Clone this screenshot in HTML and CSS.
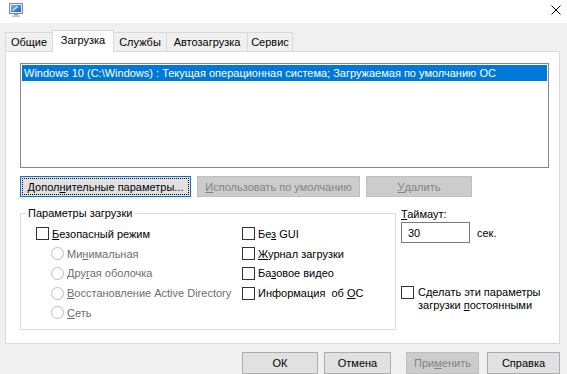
FILE: index.html
```html
<!DOCTYPE html>
<html lang="ru">
<head>
<meta charset="utf-8">
<title>Конфигурация системы</title>
<link rel="stylesheet" href="styles.css">
</head>
<body>
<div class="window">
  <div class="titlebar">
    <svg class="app-icon" width="16" height="16" viewBox="0 0 16 16">
      <defs>
        <linearGradient id="scr" x1="0" y1="0" x2="1" y2="1">
          <stop offset="0" stop-color="#6fb4f0"/>
          <stop offset="1" stop-color="#1a5fc8"/>
        </linearGradient>
      </defs>
      <rect x="1.5" y="1.5" width="13" height="10" fill="#e8eef5" stroke="#7d8a99"/>
      <rect x="3" y="3" width="10" height="7" fill="url(#scr)"/>
      <path d="M4 8 L9 4 L10 5 L5 9 Z" fill="#ffffff" opacity="0.8"/>
      <rect x="6" y="12" width="4" height="1.5" fill="#8a96a3"/>
      <rect x="4" y="13.5" width="8" height="1.5" fill="#b5bec8"/>
    </svg>
    <div class="close">
      <svg width="10" height="10" viewBox="0 0 10 10">
        <path d="M0.5 0.5 L9.5 9.5 M9.5 0.5 L0.5 9.5" stroke="#000" stroke-width="1" fill="none"/>
      </svg>
    </div>
  </div>
  <div class="client">
    <div class="tabs">
      <div class="tab t1">Общие</div>
      <div class="tab t2 active">Загрузка</div>
      <div class="tab t3">Службы</div>
      <div class="tab t4">Автозагрузка</div>
      <div class="tab t5">Сервис</div>
    </div>
    <div class="panel">
      <div class="listbox">
        <div class="item selected">Windows 10 (C:\Windows) : Текущая операционная система; Загружаемая по умолчанию ОС</div>
      </div>
      <div class="btnrow">
        <div class="btn focused b-adv"><span class="focusring">Допол<u>н</u>ительные параметры...</span></div>
        <div class="btn disabled b-def"><u>И</u>спользовать по умолчанию</div>
        <div class="btn disabled b-del"><u>У</u>далить</div>
      </div>
      <div class="lower">
        <fieldset class="group">
          <legend>Параметры загрузки</legend>
          <div class="opts">
            <div class="col">
              <div class="opt"><span class="chk"></span><span><u>Б</u>езопасный режим</span></div>
              <div class="opt sub dis"><span class="radio"></span><span>Ми<u>н</u>имальная</span></div>
              <div class="opt sub dis"><span class="radio"></span><span>Дру<u>г</u>ая оболочка</span></div>
              <div class="opt sub dis"><span class="radio"></span><span><u>В</u>осстановление Active Directory</span></div>
              <div class="opt sub dis"><span class="radio"></span><span><u>С</u>еть</span></div>
            </div>
            <div class="col">
              <div class="opt"><span class="chk"></span><span>Бе<u>з</u> GUI</span></div>
              <div class="opt"><span class="chk"></span><span><u>Ж</u>урнал загрузки</span></div>
              <div class="opt"><span class="chk"></span><span>Ба<u>з</u>овое видео</span></div>
              <div class="opt"><span class="chk"></span><span>Информация&nbsp; об <u>О</u>С</span></div>
            </div>
          </div>
        </fieldset>
        <div class="side">
          <div class="lbl"><u>Т</u>аймаут:</div>
          <div class="timeout">
            <div class="input">30</div>
            <span class="unit">сек.</span>
          </div>
          <div class="persist">
            <span class="chk"></span>
            <span class="ptext">Сделать эти параметры<br>загрузки <u>п</u>остоянными</span>
          </div>
        </div>
      </div>
    </div>
    <div class="footer">
      <div class="btn f-ok">ОК</div>
      <div class="btn f-cancel">Отмена</div>
      <div class="btn disabled f-apply">При<u>м</u>енить</div>
      <div class="btn f-help">Справка</div>
    </div>
  </div>
</div>
</body>
</html>
```

FILE: styles.css
```css
* { box-sizing: border-box; }
html, body { margin: 0; padding: 0; }
body {
  width: 567px;
  height: 374px;
  overflow: hidden;
  background: #f0f0f0;
  font-family: "Liberation Sans", Arial, sans-serif;
  font-size: 11px;
  color: #000;
}
u { text-decoration: underline; text-underline-offset: 1px; }

.window { width: 567px; height: 374px; display: flex; flex-direction: column; }

.titlebar {
  height: 23px;
  background: #ffffff;
  display: flex;
  align-items: flex-start;
  padding-left: 8px;
  flex-shrink: 0;
}
.app-icon { margin-top: 2px; }
.close {
  margin-left: auto;
  width: 22px;
  height: 20px;
  display: flex;
  align-items: center;
  justify-content: center;
}

.client { flex: 1; display: flex; flex-direction: column; }

.tabs {
  display: flex;
  align-items: flex-end;
  padding-top: 7px;
  padding-left: 5px;
  height: 28px;
}
.tab {
  height: 19px;
  border: 1px solid #d9d9d9;
  border-bottom: none;
  margin-right: -1px;
  background: #f0f0f0;
  display: flex;
  align-items: center;
  justify-content: center;
  line-height: 14px;
  padding-bottom: 1px;
}
.tab.active {
  height: 22px;
  background: #ffffff;
  margin-bottom: -1px;
  position: relative;
  z-index: 1;
  padding-bottom: 3px;
}
.t1 { width: 48px; }
.t2 { width: 62px; }
.t3 { width: 54px; }
.t4 { width: 82px; }
.t5 { width: 46px; }

.panel {
  margin-left: 5px;
  width: 555px;
  height: 293px;
  background: #ffffff;
  border: 1px solid #d9d9d9;
  padding: 11px 0 0 14px;
}

.listbox {
  width: 529px;
  height: 105px;
  border: 1px solid #828790;
  padding: 1px;
}
.item {
  height: 16px;
  line-height: 16px;
  padding-left: 2px;
  white-space: nowrap;
  overflow: hidden;
}
.item.selected { background: #0078d7; color: #ffffff; }

.btnrow { display: flex; gap: 6px; margin-top: 8px; }
.btn {
  height: 21px;
  background: #e1e1e1;
  border: 1px solid #adadad;
  display: flex;
  align-items: center;
  justify-content: center;
  white-space: nowrap;
}
.btn.disabled { background: #cccccc; border-color: #bfbfbf; color: #838383; }
.btn.focused { border-color: #0078d7; padding: 1px; }
.focusring {
  flex: 1;
  align-self: stretch;
  border: 1px dotted #000;
  display: flex;
  align-items: center;
  justify-content: center;
}
.b-adv { width: 171px; }
.b-def { width: 163px; }
.b-del { width: 106px; }

.lower { display: flex; gap: 5px; margin-top: 9px; }

.group {
  margin: 0;
  width: 376px;
  height: 124px;
  border: 1px solid #dcdcdc;
  padding: 4px 0 3px 15px;
  min-width: 0;
}
.group legend {
  padding: 0 2px;
  margin-left: -10px;
  line-height: 14px;
}
.opts { display: grid; grid-template-columns: 206px 1fr; }
.col { display: flex; flex-direction: column; }
.opt { height: 19.75px; display: flex; align-items: center; white-space: nowrap; }
.opt.sub { padding-left: 15px; }
.opt.dis { color: #6d6d6d; }

.chk {
  width: 13px;
  height: 13px;
  border: 1px solid #333333;
  background: #ffffff;
  margin-right: 3px;
  flex-shrink: 0;
}
.radio {
  width: 13px;
  height: 13px;
  border: 1px solid #bcbcbc;
  border-radius: 50%;
  background: #ffffff;
  margin-right: 3px;
  flex-shrink: 0;
}

.side { display: flex; flex-direction: column; padding-top: 1px; }
.lbl { height: 15px; line-height: 14px; }
.timeout { display: flex; align-items: center; }
.input {
  width: 69px;
  height: 21px;
  border: 1px solid #7a7a7a;
  background: #fff;
  padding-left: 6px;
  display: flex;
  align-items: center;
}
.unit { margin-left: 7px; }
.persist { display: flex; align-items: flex-start; margin-top: 43px; }
.persist .chk { margin-right: 4px; }
.ptext { line-height: 13px; }

.footer {
  display: flex;
  justify-content: flex-end;
  padding-right: 7px;
  margin-top: 8px;
}
.footer .btn { height: 22px; }
.f-ok { width: 76px; }
.f-cancel { width: 67px; margin-left: 6px; }
.f-apply { width: 73px; margin-left: 15px; }
.f-help { width: 73px; margin-left: 8px; }
```
